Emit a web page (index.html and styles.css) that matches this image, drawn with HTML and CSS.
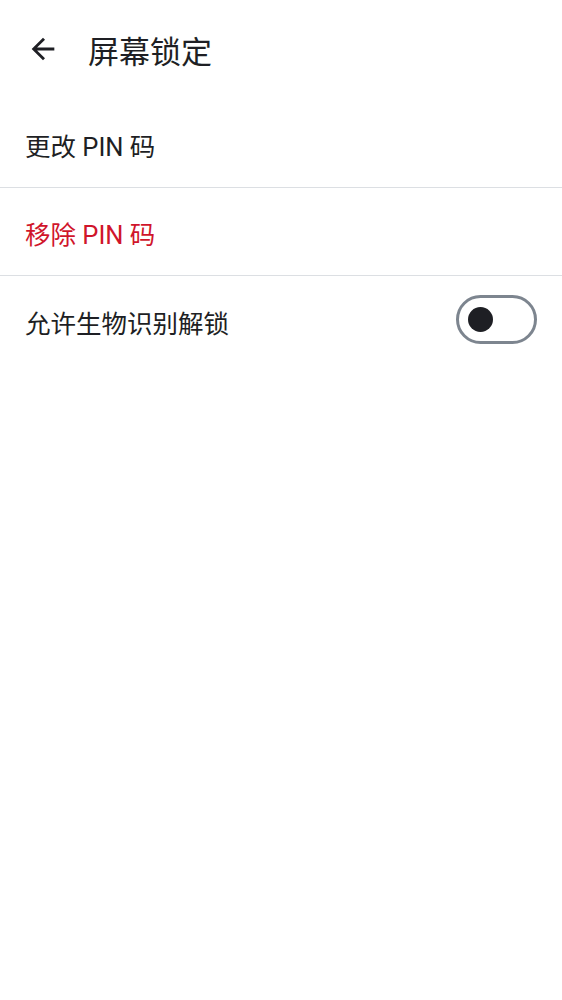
FILE: index.html
```html
<!DOCTYPE html>
<html lang="zh">
<head>
<meta charset="utf-8">
<link rel="stylesheet" href="styles.css">
</head>
<body>
<header class="topbar">
  <svg class="back" viewBox="0 0 24 24" width="34" height="34" aria-hidden="true">
    <path d="M20 11H7.83l5.59-5.59L12 4l-8 8 8 8 1.41-1.41L7.83 13H20v-2z" fill="#1e1f24"/>
  </svg>
  <h1 class="title">屏幕锁定</h1>
</header>
<ul class="list">
  <li class="row">更改 PIN 码</li>
  <li class="row danger">移除 PIN 码</li>
  <li class="row">
    <span>允许生物识别解锁</span>
    <span class="toggle"><span class="knob"></span></span>
  </li>
</ul>
</body>
</html>
```

FILE: styles.css
```css
* { box-sizing: border-box; }
body {
  margin: 0;
  background: #ffffff;
  font-family: Roboto, "Noto Sans CJK SC", sans-serif;
  color: #1e1f24;
}
.topbar {
  height: 100px;
  display: flex;
  align-items: center;
  padding-left: 26px;
  padding-top: 4px;
}
.back { display: block; margin-right: 28px; margin-top: -6px; }
.title {
  margin: 0;
  font-size: 31px;
  font-weight: 400;
  line-height: 1;
}
.list { list-style: none; margin: 0; padding: 0; }
.row {
  height: 88px;
  display: flex;
  align-items: center;
  justify-content: space-between;
  padding: 2px 25px 0 25px;
  font-size: 25.5px;
  border-bottom: 1px solid #dcdfe3;
}
.row:last-child { border-bottom: none; }
.danger { color: #d0152b; }
.toggle {
  width: 81px;
  height: 49px;
  border: 3px solid #7d858f;
  border-radius: 25px;
  display: flex;
  align-items: center;
  padding-left: 9px;
  margin-top: -4px;
}
.knob {
  width: 25px;
  height: 25px;
  border-radius: 50%;
  background: #1e1f24;
}
```
